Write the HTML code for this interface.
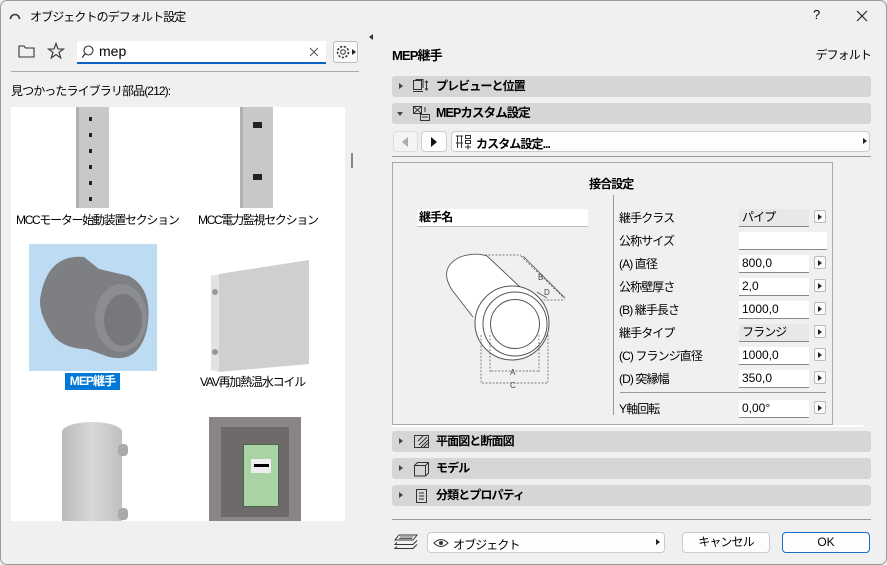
<!DOCTYPE html>
<html><head><meta charset="utf-8"><style>
*{margin:0;padding:0;box-sizing:border-box}
body{width:887px;height:565px;background:#f0f0f0;font-family:"Liberation Sans","Noto Sans CJK JP",sans-serif;font-size:12px;letter-spacing:-0.9px;color:#000;position:relative;overflow:hidden}
.a{position:absolute}
.n{letter-spacing:0}
.hdr{position:absolute;left:392px;width:479px;height:21px;background:#d6d6d6;border-radius:3px;font-weight:bold;font-size:12px;line-height:21px}
.hdr .t{position:absolute;left:44px}
.hdr .tri{position:absolute;left:7px;top:7px;width:0;height:0;border-left:4px solid #444;border-top:3.5px solid transparent;border-bottom:3.5px solid transparent}
.lbl{position:absolute;left:619px;font-size:12px}
.fld{position:absolute;left:739px;width:70px;height:18px;background:#fff;border-bottom:1px solid #888;padding-left:3px;font-size:12px;line-height:17px;letter-spacing:0}
.fld.g{background:#e8e8e8;letter-spacing:-0.9px}
.ab{position:absolute;left:814px;width:12px;height:13px;background:#fafafa;border:1px solid #bbb;border-radius:2px}
.ab:after{content:"";position:absolute;left:3px;top:2.5px;border-left:4px solid #222;border-top:3.5px solid transparent;border-bottom:3.5px solid transparent}
.btn{position:absolute;background:#fdfdfd;border:1px solid #ccc;border-radius:4px;text-align:center;font-size:12px}
</style></head><body>
<div class="a" style="left:0;top:0;width:887px;height:565px;border:1px solid #999;border-radius:7px"></div>
<svg class="a" style="left:9px;top:10px" width="12" height="10"><path d="M1.5 9 A4.5 4.5 0 0 1 10.5 9" fill="none" stroke="#333" stroke-width="1.6"/></svg>
<div class="a" style="left:30px;top:8px;font-size:12px">オブジェクトのデフォルト設定</div>
<div class="a" style="left:813px;top:7px;font-size:13px">?</div>
<svg class="a" style="left:856px;top:10px" width="12" height="12"><path d="M1 1L11 11M11 1L1 11" stroke="#222" stroke-width="1.2"/></svg>
<svg class="a" style="left:18px;top:44px" width="18" height="15"><path d="M1 2H6L7.5 4H16V13H1Z" fill="none" stroke="#333" stroke-width="1.1"/></svg>
<svg class="a" style="left:47px;top:42px" width="18" height="18"><path d="M9 1.5L11 7H16.5L12 10.3L13.8 16L9 12.6L4.2 16L6 10.3L1.5 7H7Z" fill="none" stroke="#333" stroke-width="1.1"/></svg>
<div class="a" style="left:77px;top:41px;width:249px;height:23px;background:#fff;border-bottom:2px solid #0a62c4"></div>
<svg class="a" style="left:81px;top:45px" width="14" height="14"><circle cx="7.5" cy="5.5" r="4.5" fill="none" stroke="#333" stroke-width="1.1"/><path d="M4.3 8.7L1 12.5" stroke="#333" stroke-width="1.2"/></svg>
<div class="a n" style="left:99px;top:43px;font-size:14px">mep</div>
<svg class="a" style="left:309px;top:47px" width="10" height="10"><path d="M1 1L9 9M9 1L1 9" stroke="#555" stroke-width="1"/></svg>
<div class="a" style="left:333px;top:41px;width:25px;height:22px;border:1px solid #bbb;border-radius:3px;background:#fafafa"></div>
<svg class="a" style="left:335px;top:44px" width="16" height="16"><circle cx="8" cy="8" r="5.5" fill="none" stroke="#333" stroke-width="1.6" stroke-dasharray="2.2 1.6"/><circle cx="8" cy="8" r="2.3" fill="none" stroke="#333"/></svg>
<div class="a" style="left:352px;top:49px;border-left:4px solid #222;border-top:3.5px solid transparent;border-bottom:3.5px solid transparent"></div>
<div class="a" style="left:11px;top:71px;width:348px;height:1px;background:#aaa"></div>
<div class="a" style="left:11px;top:82px;font-size:12px">見つかったライブラリ部品(212):</div>
<div class="a" style="left:11px;top:107px;width:334px;height:414px;background:#fff;overflow:hidden">
 <div class="a" style="left:65px;top:0;width:33px;height:101px;background:#c8c8c8;border-left:3px solid #b0b0b0"></div>
 <div class="a" style="left:78px;top:10px;width:3px;height:4px;background:#222;box-shadow:0 16px #222,0 32px #222,0 48px #222,0 64px #222,0 80px #222"></div>
 <div class="a" style="left:229px;top:0;width:33px;height:101px;background:#c8c8c8;border-left:3px solid #b0b0b0"></div>
 <div class="a" style="left:242px;top:15px;width:9px;height:6px;background:#222;box-shadow:0 52px #222"></div>
 <div class="a" style="left:5px;top:104px;font-size:12px;letter-spacing:-1.3px">MCCモーター始動装置セクション</div>
 <div class="a" style="left:187px;top:104px;font-size:12px;letter-spacing:-1.3px">MCC電力監視セクション</div>
 <div class="a" style="left:18px;top:137px;width:128px;height:127px;background:#bddcf4"></div>
 <svg class="a" style="left:18px;top:137px" width="128" height="127"><path d="M12 50 Q20 10 55 13 L70 25 L100 32 Q125 45 118 85 Q110 120 80 113 L58 105 Q30 105 20 85 Q8 65 12 50Z" fill="#7e7f83"/><ellipse cx="92" cy="74" rx="26" ry="34" fill="#8c8d91"/><ellipse cx="94" cy="76" rx="19" ry="26" fill="#77787c"/></svg>
 <div class="a" style="left:54px;top:266px;width:55px;height:17px;background:#0078d7;color:#fff;font-weight:bold;font-size:12px;line-height:17px;text-align:center">MEP継手</div>
 <svg class="a" style="left:198px;top:145px" width="108" height="120"><path d="M10 22L100 8V112L10 120Z" fill="#cfcfcf"/><path d="M2 24L10 22V120L2 118Z" fill="#e2e2e2"/><circle cx="6" cy="40" r="3" fill="#999"/><circle cx="6" cy="100" r="3" fill="#999"/></svg>
 <div class="a" style="left:189px;top:266px;font-size:12px;letter-spacing:-1.2px">VAV再加熱温水コイル</div>
 <div class="a" style="left:51px;top:315px;width:60px;height:110px;background:linear-gradient(90deg,#bbb,#d8d8d8,#c0c0c0);border-radius:30px/10px"></div>
 <div class="a" style="left:107px;top:337px;width:10px;height:12px;background:#aaa;border-radius:4px;box-shadow:0 64px #aaa"></div>
 <div class="a" style="left:198px;top:310px;width:92px;height:110px;background:#8a8584"></div>
 <div class="a" style="left:210px;top:320px;width:68px;height:90px;background:#6e6a69"></div>
 <div class="a" style="left:232px;top:337px;width:36px;height:63px;background:#a9d3a4;border:1px solid #4c6a4a"></div>
 <div class="a" style="left:240px;top:352px;width:20px;height:14px;background:#eee"></div>
 <div class="a" style="left:243px;top:357px;width:15px;height:3px;background:#000"></div>
</div>
<div class="a" style="left:351px;top:153px;width:2px;height:15px;background:#888"></div>
<div class="a" style="left:369px;top:34px;border-right:4px solid #333;border-top:3.5px solid transparent;border-bottom:3.5px solid transparent"></div>
<div class="a" style="left:392px;top:45px;font-weight:bold;font-size:13px">MEP継手</div>
<div class="a" style="right:16px;top:46px;font-size:12px">デフォルト</div>
<div class="hdr" style="top:76px"><span class="tri"></span><svg class="a" style="left:20px;top:3px" width="18" height="15"><rect x="1.5" y="1.5" width="8" height="9" fill="none" stroke="#333"/><path d="M3.5 0.5H11V9M1 12.5H11" fill="none" stroke="#333"/><path d="M14.5 2V11M13 3.5L14.5 2L16 3.5M13 9.5L14.5 11L16 9.5" fill="none" stroke="#333"/></svg><span class="t">プレビューと位置</span></div>
<div class="hdr" style="top:103px"><span class="a" style="left:5px;top:9px;border-top:4px solid #444;border-left:3.5px solid transparent;border-right:3.5px solid transparent"></span><svg class="a" style="left:20px;top:2px" width="20" height="17"><rect x="1.5" y="1.5" width="8" height="7" fill="none" stroke="#333"/><path d="M1.5 1.5L9.5 8.5M9.5 1.5L1.5 8.5" stroke="#333"/><rect x="8.5" y="9.5" width="9" height="6" fill="none" stroke="#333"/><path d="M10 12H16M13 2V7" stroke="#333"/></svg><span class="t" style="font-size:12.5px">MEPカスタム設定</span></div>
<div class="btn" style="left:393px;top:131px;width:25px;height:21px;background:#f4f4f4;border-color:#ddd"><span class="a" style="left:8px;top:5px;border-right:6px solid #aaa;border-top:5px solid transparent;border-bottom:5px solid transparent"></span></div>
<div class="btn" style="left:421px;top:131px;width:26px;height:21px"><span class="a" style="left:9px;top:5px;border-left:6px solid #111;border-top:5px solid transparent;border-bottom:5px solid transparent"></span></div>
<div class="btn" style="left:451px;top:131px;width:419px;height:21px;text-align:left"><svg class="a" style="left:3px;top:2px" width="18" height="16"><path d="M1 2H8M2.5 2V14M6.5 2V14M1 9H8" stroke="#333"/><rect x="10.5" y="1.5" width="5" height="3" fill="none" stroke="#333"/><rect x="10.5" y="6.5" width="5" height="3" fill="none" stroke="#333"/><path d="M10 13H16M13 10.5V15.5" stroke="#333"/></svg><span class="a" style="left:24px;top:3px;font-weight:bold">カスタム設定...</span><span class="a" style="left:411px;top:6px;border-left:4px solid #222;border-top:3.5px solid transparent;border-bottom:3.5px solid transparent"></span></div>
<div class="a" style="left:392px;top:156px;width:479px;height:1px;background:#999"></div>
<div class="a" style="left:392px;top:162px;width:441px;height:263px;border:1px solid #a8a8a8"></div>
<div class="a" style="left:589px;top:175px;font-weight:bold">接合設定</div>
<div class="a" style="left:613px;top:195px;width:1px;height:220px;background:#999"></div>
<div class="a" style="left:417px;top:209px;width:171px;height:18px;background:#fff;border-bottom:1px solid #bbb;padding-left:2px;font-weight:bold;line-height:17px">継手名</div>
<svg class="a" style="left:0;top:0" width="887" height="565" font-family="Liberation Sans" font-size="8" fill="#444">
<path d="M478 255H521M540 300H565M521 256L564 298" fill="none" stroke="#555" stroke-dasharray="2 1.5" stroke-width="0.8"/>
<path d="M473 317 L452 290 Q438 268 460 257 Q475 252 487 256 L520 287" fill="#fff" stroke="#555" stroke-width="0.9"/>
<circle cx="512" cy="323" r="37" fill="#fff" stroke="#555"/>
<circle cx="515" cy="324" r="32" fill="#fff" stroke="#555"/>
<circle cx="515" cy="324" r="24.5" fill="#fff" stroke="#555"/>
<path d="M523 256L565 298M537 292L547 298" stroke="#555" stroke-width="0.8"/>
<text x="538" y="280">B</text><text x="544" y="295">D</text>
<path d="M481 335V384M490 335V372M539 335V372M548 335V384M482 383H547M491 371H538" stroke="#555" stroke-width="0.7" stroke-dasharray="2 1.5"/>
<text x="510" y="375">A</text><text x="510" y="388">C</text>
</svg>
<div class="lbl" style="top:209px">継手クラス</div><div class="fld g" style="top:209px">パイプ</div><div class="ab" style="top:210px"></div>
<div class="lbl" style="top:232px">公称サイズ</div><div class="fld" style="left:739px;top:232px;width:88px"></div>
<div class="lbl" style="top:255px">(A) 直径</div><div class="fld" style="top:255px">800,0</div><div class="ab" style="top:256px"></div>
<div class="lbl" style="top:278px">公称壁厚さ</div><div class="fld" style="top:278px">2,0</div><div class="ab" style="top:279px"></div>
<div class="lbl" style="top:301px">(B) 継手長さ</div><div class="fld" style="top:301px">1000,0</div><div class="ab" style="top:302px"></div>
<div class="lbl" style="top:324px">継手タイプ</div><div class="fld g" style="top:324px">フランジ</div><div class="ab" style="top:325px"></div>
<div class="lbl" style="top:347px">(C) フランジ直径</div><div class="fld" style="top:347px">1000,0</div><div class="ab" style="top:348px"></div>
<div class="lbl" style="top:370px">(D) 突縁幅</div><div class="fld" style="top:370px">350,0</div><div class="ab" style="top:371px"></div>
<div class="a" style="left:620px;top:392px;width:206px;height:1px;background:#999"></div>
<div class="lbl" style="top:400px">Y軸回転</div><div class="fld" style="top:400px">0,00°</div><div class="ab" style="top:401px"></div>
<div class="a" style="left:392px;top:425px;width:471px;height:2px;background:#fff"></div>
<div class="hdr" style="top:431px"><span class="tri"></span><svg class="a" style="left:21px;top:3px" width="18" height="15"><rect x="1.5" y="1.5" width="14" height="12" fill="none" stroke="#333"/><path d="M8 13L15 6M11 13L15 9M6 11L14 3M10 2L5 7" stroke="#333"/></svg><span class="t">平面図と断面図</span></div>
<div class="hdr" style="top:458px"><span class="tri"></span><svg class="a" style="left:21px;top:3px" width="18" height="16"><path d="M1.5 4.5H12.5V15H1.5ZM1.5 4.5L4.5 1.5H15.5V12L12.5 15M12.5 4.5L15.5 1.5" fill="none" stroke="#333"/></svg><span class="t">モデル</span></div>
<div class="hdr" style="top:485px"><span class="tri"></span><svg class="a" style="left:23px;top:3px" width="14" height="16"><rect x="1.5" y="1.5" width="10" height="13" fill="none" stroke="#333"/><path d="M4 5H9M4 8H9M4 11H9" stroke="#333"/></svg><span class="t">分類とプロパティ</span></div>
<div class="a" style="left:392px;top:519px;width:479px;height:1px;background:#999"></div>
<svg class="a" style="left:393px;top:533px" width="26" height="18"><path d="M6 2H24L20 7H2ZM4 9.5L2 11.5L20 11.5L24 7.5M4 13.5L2 15.5H20L24 11.5" fill="none" stroke="#333"/><path d="M7 4H20M6 5.5H19" stroke="#333" stroke-width="0.8"/></svg>
<div class="btn" style="left:427px;top:532px;width:238px;height:21px;text-align:left"><svg class="a" style="left:5px;top:5px" width="16" height="10"><path d="M1 5Q8 -2 15 5Q8 12 1 5Z" fill="none" stroke="#333"/><circle cx="8" cy="5" r="2" fill="#333"/></svg><span class="a" style="left:25px;top:3px">オブジェクト</span><span class="a" style="left:228px;top:6px;border-left:4px solid #222;border-top:3.5px solid transparent;border-bottom:3.5px solid transparent"></span></div>
<div class="btn" style="left:682px;top:532px;width:88px;height:21px;line-height:19px">キャンセル</div>
<div class="btn n" style="left:782px;top:532px;width:88px;height:21px;line-height:19px;border-color:#1a6fc9">OK</div>
</body></html>
